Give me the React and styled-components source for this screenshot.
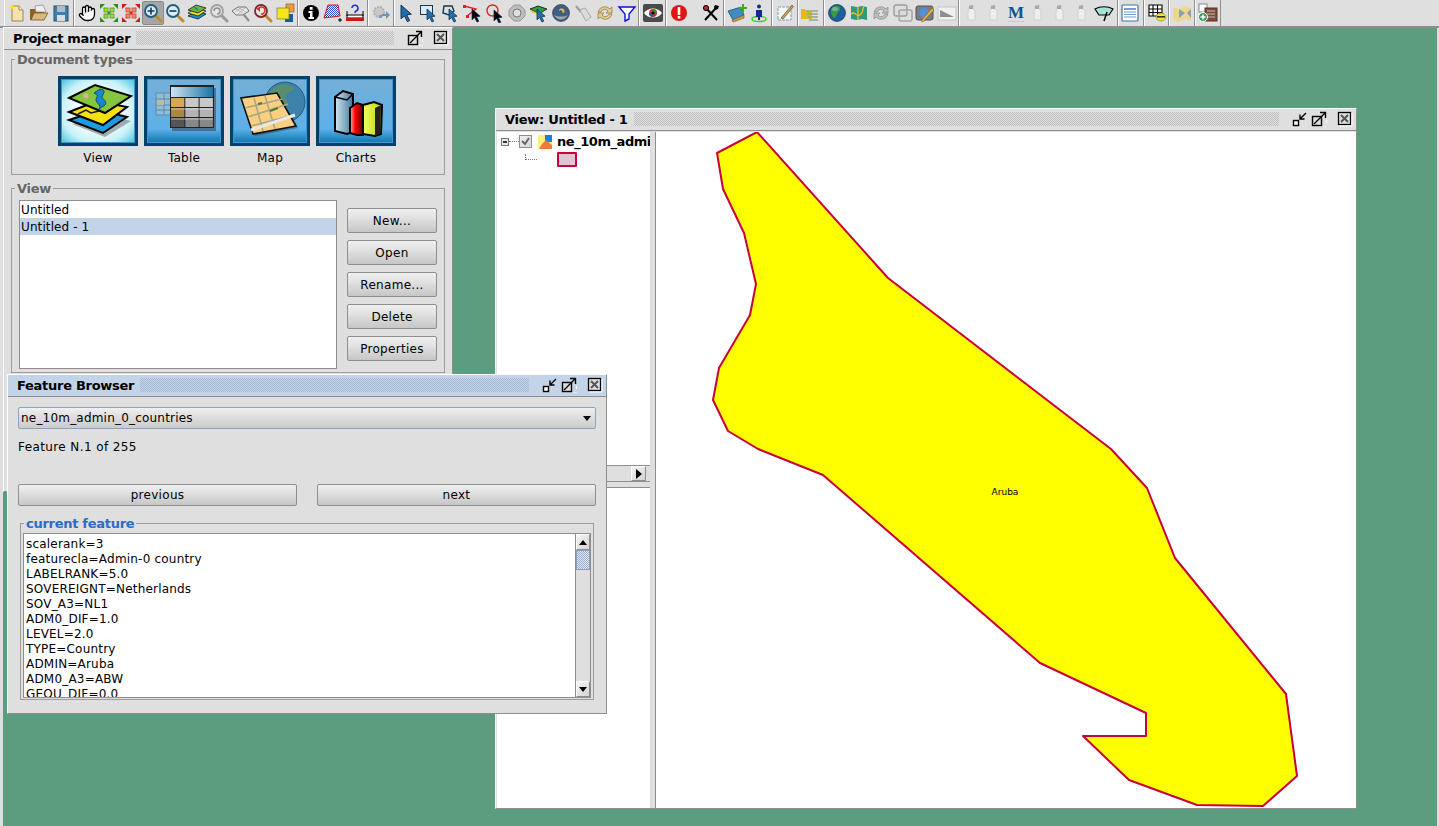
import styled, { createGlobalStyle } from "styled-components";
import { Hand } from "lucide-react";

const GlobalStyle = createGlobalStyle`
  html, body { margin: 0; padding: 0; height: 100%; overflow: hidden; background: #5c9d7f; }
  #root { height: 100%; }
`;

const Page = styled.div`
  display: flex;
  flex-direction: column;
  height: 826px;
  font-family: "DejaVu Sans", sans-serif;
  font-size: 12px;
  color: #000;
`;

/* ---------- toolbar ---------- */
const Toolbar = styled.div`
  display: flex;
  flex: none;
  height: 26px;
  padding-left: 4px;
  background: #dfdfdf;
  border-bottom: 2px solid #8e8e8e;
`;
const ToolGroup = styled.div`
  display: flex;
  flex: none;
  box-sizing: border-box;
  width: ${(p) => p.$w}px;
  padding-left: ${(p) => p.$pad ?? 1}px;
  border-left: 1px solid #fff;
  border-right: 1px solid #8e8e8e;
`;
const ToolSlot = styled.div`
  display: flex;
  flex: none;
  align-items: center;
  justify-content: center;
  box-sizing: border-box;
  width: 22px;
  height: 24px;
  margin-top: 1px;
  margin-left: ${(p) => p.$skip ?? 0}px;
  ${(p) => p.$active && "background: #a6a6a6; border: 1px solid #8a8a8a; border-radius: 2px;"}
`;
const LetterIcon = styled.span`
  font-family: "Liberation Serif", serif;
  font-weight: 700;
  font-size: 17px;
  color: #14508f;
  border-bottom: 1px solid #c8c8c8;
  line-height: 16px;
`;

const G = ({ children, size = 20 }) => (
  <svg width={size} height={size} viewBox="0 0 20 20">
    {children}
  </svg>
);
const Cursor = ({ x = 6, y = 4, c = "#1f6fb0", s = 1 }) => (
  <path
    transform={`translate(${x} ${y}) scale(${s})`}
    d="M0 0l9 8-4 .5 2.5 5-2 1-2.5-5L0 12z"
    fill={c}
    stroke="#0a2a4a"
    strokeWidth=".8"
  />
);
const Lens = ({ ring = "#1d5f7f", fill = "#dcebf4", handle = "#c08a30", children }) => (
  <>
    <line x1="12" y1="12" x2="18" y2="18" stroke={handle} strokeWidth="3" strokeLinecap="round" />
    <circle cx="8" cy="8" r="6" fill={fill} stroke={ring} strokeWidth="1.8" />
    {children}
  </>
);
const Extent = ({ c, dark, light }) => (
  <>
    <path d="M5 5l10 10M15 5L5 15" stroke={c} strokeWidth="1.5" />
    <path d="M1 1h5L1 6zM19 1h-5l5 5zM1 19h5l-5-5zM19 19h-5l5-5z" fill={dark} />
    <rect x="5" y="5" width="4" height="4" fill={light} stroke={dark} strokeWidth=".6" />
    <rect x="11" y="5" width="4" height="4" fill={light} stroke={dark} strokeWidth=".6" />
    <rect x="5" y="11" width="4" height="4" fill={light} stroke={dark} strokeWidth=".6" />
    <rect x="11" y="11" width="4" height="4" fill={light} stroke={dark} strokeWidth=".6" />
  </>
);
const Globe = () => (
  <>
    <circle cx="10" cy="10" r="8.5" fill="#1c5f9c" stroke="#123" strokeWidth=".6" />
    <path d="M5 5c3-3 7-2 8 0 1 3-2 3-3 6s-3 5-4 3-4-6-1-9z" fill="#3d9a3d" />
    <ellipse cx="8" cy="6" rx="3" ry="2" fill="#9ed0f0" opacity=".5" />
  </>
);
const Bottle = () => (
  <>
    <path d="M7 3l4-1v4l2 1v10H6V7l1-1z" fill="#eeeeee" stroke="#d0d0d0" />
    <path d="M7 3l4-1v4H7z" fill="#a9a9a9" />
  </>
);

const icons = {
  newDoc: (
    <G>
      <path d="M5 3h7l4 4v11H5z" fill="#f6e2ae" stroke="#a5814a" />
      <path d="M12 3v4h4" fill="#fff2cc" stroke="#a5814a" />
      <path d="M5 1l1 2 2 .5-2 1L5 7 4 4.500l-2-1 2-.5z" fill="#f5e51a" />
    </G>
  ),
  open: (
    <G>
      <path d="M1 6h5l1 2h8v9H1z" fill="#8a6228" />
      <path d="M6 3l8-1 3 7H7z" fill="#eee" stroke="#888" strokeWidth=".7" />
      <path d="M2 17l3-7h14l-4 7z" fill="#d9b97c" stroke="#7a5520" strokeWidth=".8" />
    </G>
  ),
  save: (
    <G>
      <rect x="3" y="3" width="14" height="15" fill="#3f7fb0" stroke="#22506f" />
      <rect x="6" y="3" width="8" height="6" fill="#b5b9bc" />
      <rect x="6" y="12" width="8" height="6" fill="#dcdcdc" />
    </G>
  ),
  hand: <Hand size={18} fill="#fff" color="#000" strokeWidth={1.7} />,
  extentGreen: (
    <G>
      <Extent c="#3a9a2a" dark="#2c8a1e" light="#a8d634" />
    </G>
  ),
  extentRed: (
    <G>
      <Extent c="#d8301c" dark="#c8200e" light="#f08a78" />
    </G>
  ),
  zoomIn: (
    <G>
      <Lens>
        <path d="M4.500 8h7M8 4.500v7" stroke="#123a55" strokeWidth="1.6" />
      </Lens>
    </G>
  ),
  zoomOut: (
    <G>
      <Lens>
        <path d="M4.500 8h7" stroke="#123a55" strokeWidth="1.6" />
      </Lens>
    </G>
  ),
  layers: (
    <G>
      <path d="M1 13l8-5 10 3-8 5z" fill="#1b8fd8" stroke="#102020" strokeWidth=".8" />
      <path d="M1 10l8-5 10 3-8 5z" fill="#f4e01a" stroke="#102020" strokeWidth=".8" />
      <path d="M1 7l8-5 10 3-8 5z" fill="#6fb43a" stroke="#102020" strokeWidth=".8" />
      <path d="M7 4c2 1 2 2 4 3" stroke="#1b6fb8" fill="none" strokeWidth="1.2" />
    </G>
  ),
  zoomGray: (
    <G>
      <Lens ring="#a0a0a0" handle="#9a9a9a" fill="#e6e6e6">
        <path d="M5 8a3 3 0 1 1 3 3" fill="none" stroke="#8c8c8c" strokeWidth="1.500" />
      </Lens>
    </G>
  ),
  zoomMap: (
    <G>
      <line x1="13" y1="12" x2="18" y2="18" stroke="#8a8a8a" strokeWidth="2" />
      <path d="M1 8l6-4h8l3 4-6 4H5z" fill="#e8e8e8" stroke="#555" strokeWidth=".8" />
      <path d="M5 6l8 5M8 5l7 4M4 9l6-4M7 11l7-6" stroke="#9a9a9a" strokeWidth=".6" />
    </G>
  ),
  zoomBack: (
    <G>
      <Lens ring="#7a2a2a" fill="#eee5e5">
        <path d="M5 7a3.500 3.500 0 1 1 3 4" fill="none" stroke="#d0302a" strokeWidth="1.600" />
        <path d="M3 5h4v4z" fill="#d0302a" />
      </Lens>
    </G>
  ),
  overlap: (
    <G>
      <rect x="11" y="1" width="8" height="8" fill="#f29a3c" stroke="#7a5020" strokeWidth=".6" />
      <rect x="10" y="11" width="8" height="8" fill="#1a5d9e" />
      <rect x="2" y="5" width="12" height="11" fill="#f5e51a" stroke="#665" strokeWidth=".6" />
    </G>
  ),
  info: (
    <G>
      <circle cx="10" cy="10" r="8" fill="#000" />
      <rect x="8.800" y="4" width="2.800" height="2.800" fill="#fff" />
      <path d="M7.500 8h4v6h1.500v2H7.500v-2H9v-4H7.500z" fill="#fff" />
    </G>
  ),
  polygon: (
    <G>
      <defs>
        <pattern id="hatch" width="2" height="2" patternUnits="userSpaceOnUse">
          <rect width="2" height="2" fill="#fff" />
          <rect width="1" height="1" fill="#2244cc" />
          <rect x="1" y="1" width="1" height="1" fill="#2244cc" />
        </pattern>
      </defs>
      <path d="M5 2h10l2 11-16 2z" fill="url(#hatch)" stroke="#e01010" />
      <path d="M15 17h4M17 15v4" stroke="#000" />
    </G>
  ),
  measure: (
    <G>
      <path d="M7 5a3 3 0 1 1 4 3c-1 .5-1 1-1 2" fill="none" stroke="#2030c0" strokeWidth="1.500" />
      <rect x="2" y="12" width="16" height="3" fill="#fff" stroke="#000" />
      <rect x="1" y="15" width="18" height="3" fill="#d01818" />
      <path d="M2 8v5M18 8v5" stroke="#000" />
    </G>
  ),
  gears: (
    <G>
      <circle cx="8" cy="9" r="5" fill="#c8c8c8" stroke="#b0b0b0" strokeWidth="2" strokeDasharray="2 1" />
      <path d="M11 11h4V8l4 4-4 4v-3h-4z" fill="#6d92c0" />
      <rect x="8" y="12" width="3" height="3" fill="#7a9ac2" />
    </G>
  ),
  pointer: (
    <G>
      <Cursor x={4} y={2} s={1.15} />
    </G>
  ),
  rectSel: (
    <G>
      <rect x="1.500" y="2.500" width="12" height="9" fill="#dcebf4" stroke="#14384f" />
      <Cursor x={8} y={6} s={0.9} />
    </G>
  ),
  polySel: (
    <G>
      <path d="M3 3h8l2 5-5 4-6-2z" fill="none" stroke="#14384f" strokeWidth="1.400" />
      <Cursor x={8} y={6} s={0.9} />
    </G>
  ),
  lineSel: (
    <G>
      <path d="M1 3l12 3-9 7" fill="none" stroke="#e02020" strokeWidth="1.400" />
      <rect x="0" y="2" width="3" height="3" fill="#e02020" />
      <rect x="3" y="12" width="3" height="3" fill="#e02020" />
      <Cursor x={9} y={6} c="#000" s={0.9} />
    </G>
  ),
  circleSel: (
    <G>
      <circle cx="7.500" cy="7.500" r="5.500" fill="none" stroke="#e02020" strokeWidth="1.400" />
      <Cursor x={9} y={7} c="#000" s={0.9} />
    </G>
  ),
  ring: (
    <G>
      <path d="M7 2h6l5 5v6l-5 5H7l-5-5V7z" fill="#bdbdbd" stroke="#9a9a9a" />
      <circle cx="10" cy="10" r="4" fill="#dfdfdf" stroke="#777" />
    </G>
  ),
  winged: (
    <G>
      <path d="M1 6l8-3 9 3-8 5z" fill="#2f9a4a" stroke="#111" strokeWidth=".8" />
      <path d="M2 8l7 3 3-2" fill="none" stroke="#e4c820" strokeWidth="1.500" />
      <Cursor x={8} y={6} s={0.9} />
    </G>
  ),
  ballLink: (
    <G>
      <circle cx="10" cy="10" r="8.500" fill="#3d5f86" stroke="#333" strokeWidth=".6" />
      <path d="M3 12c4 6 10 6 14 0-3 2-10 2-14 0z" fill="#a0a6ac" />
      <path d="M8 7c2-3 7-1 5 3l-2-1c1-2-2-3-3-1z" fill="#eec21c" />
    </G>
  ),
  broom: (
    <G>
      <path d="M3 3l5 6" stroke="#9c9c9c" strokeWidth="2.200" />
      <path d="M7 7l5-2 6 9-5 4z" fill="#dcdcdc" stroke="#a6a6a6" />
    </G>
  ),
  sync: (
    <G>
      <path d="M3 9a7 7 0 0 1 12-3l2-2v6h-6l2-2a4 4 0 0 0-7 1z" fill="#e2cc8c" stroke="#8c7a45" strokeWidth=".7" />
      <path d="M17 11a7 7 0 0 1-12 3l-2 2v-6h6l-2 2a4 4 0 0 0 7-1z" fill="#e2cc8c" stroke="#8c7a45" strokeWidth=".7" />
    </G>
  ),
  funnel: (
    <G>
      <path d="M2 4h16l-6 7v5l-4 2v-7z" fill="#fff" stroke="#1010d8" strokeWidth="1.400" />
    </G>
  ),
  eye: (
    <G>
      <rect x="0" y="1" width="20" height="18" rx="2" fill="#4a4a4a" />
      <path d="M1 10c4-6 14-6 18 0-4 6-14 6-18 0z" fill="#fff" />
      <circle cx="10" cy="10" r="4" fill="#d03a2a" />
      <path d="M10 6a4 4 0 0 1 4 4h-4z" fill="#2d9a3a" />
      <path d="M10 14a4 4 0 0 1-4-4h4z" fill="#2a56c0" />
      <circle cx="10" cy="10" r="1.600" fill="#000" />
    </G>
  ),
  alert: (
    <G>
      <circle cx="10" cy="10" r="8" fill="#e01414" />
      <rect x="8.700" y="4" width="2.600" height="8" fill="#fff" />
      <rect x="8.700" y="13" width="2.600" height="2.600" fill="#fff" />
    </G>
  ),
  tools: (
    <G>
      <path d="M4 17L15 5" stroke="#000" strokeWidth="2" />
      <path d="M5 5l11 12" stroke="#000" strokeWidth="2" />
      <circle cx="5" cy="5" r="2.600" fill="#b02a3a" stroke="#000" />
      <path d="M14 2l4 1-1 3-3 1-1-3z" fill="#000" />
    </G>
  ),
  folderAdd: (
    <G>
      <path d="M1 8l13-4 3 8-11 5z" fill="#3f8cc0" stroke="#1a4f70" strokeWidth=".8" />
      <path d="M5 17l12-5v3l-11 4z" fill="#c49a50" stroke="#7a5520" strokeWidth=".6" />
      <path d="M12 4h3V1h2v3h3v2h-3v3h-2V6h-3z" fill="#36b02a" />
    </G>
  ),
  person: (
    <G>
      <ellipse cx="10" cy="16" rx="7" ry="2.500" fill="none" stroke="#2fd82f" strokeWidth="1.400" />
      <circle cx="10" cy="3.500" r="2" fill="#14288f" />
      <path d="M7 7h6v7h-2v3H9v-3H7z" fill="#14288f" />
    </G>
  ),
  framePen: (
    <G>
      <rect x="3" y="4" width="13" height="13" fill="#f4f4f4" stroke="#7aa0c0" strokeDasharray="3 1" />
      <path d="M6 15L17 2l1.500 1.500L8 16z" fill="#c8a050" stroke="#50401c" strokeWidth=".6" />
    </G>
  ),
  folderStack: (
    <G>
      <path d="M1 6h4l1 2h6v8H1z" fill="#e6b820" />
      <path d="M6 8h12M7 11h11M8 14h10M9 17h9" stroke="#9aa58a" strokeWidth="1.500" />
    </G>
  ),
  globe: (
    <G>
      <Globe />
    </G>
  ),
  mapTile: (
    <G>
      <path d="M2 3l6 1 5-1 5 1v13l-5-1-5 1-6-1z" fill="#2f9a7c" />
      <path d="M2 11c5-4 5 4 9 1s2-6 4-9M9 4v13" fill="none" stroke="#eec21c" strokeWidth="1.300" />
    </G>
  ),
  arrowsGray: (
    <G>
      <path d="M3 9a7 7 0 0 1 12-3l2-2v6h-6l2-2a4 4 0 0 0-7 1z" fill="#bdbdbd" stroke="#8a8a8a" strokeWidth=".7" />
      <path d="M17 11a7 7 0 0 1-12 3l-2 2v-6h6l-2 2a4 4 0 0 0 7-1z" fill="#bdbdbd" stroke="#8a8a8a" strokeWidth=".7" />
    </G>
  ),
  links: (
    <G>
      <rect x="1" y="2" width="13" height="11" rx="2" fill="#dcdcdc" stroke="#9c9c9c" strokeWidth="1.400" />
      <rect x="6" y="7" width="13" height="11" rx="2" fill="none" stroke="#a8a8a8" strokeWidth="1.600" />
    </G>
  ),
  photoPen: (
    <G>
      <rect x="1" y="3" width="17" height="14" rx="2" fill="#7c7c7c" stroke="#555" />
      <circle cx="9" cy="10" r="5" fill="#4f90d8" />
      <path d="M6 18L17 5l2 2L8 19z" fill="#e8b040" stroke="#7a5a20" strokeWidth=".6" />
    </G>
  ),
  picture: (
    <G>
      <rect x="1" y="4" width="18" height="13" fill="#f0f0f0" stroke="#c4c4c4" />
      <path d="M3 7l14 7H3z" fill="#8e8e8e" />
    </G>
  ),
  bottle: (
    <G>
      <Bottle />
    </G>
  ),
  letterM: <LetterIcon>M</LetterIcon>,
  wiper: (
    <G>
      <path d="M1 6c5-3 13-3 18 0l-4 6H5z" fill="#a8e0d8" stroke="#000" strokeWidth="1.200" />
      <path d="M10 18l3-9" stroke="#000" strokeWidth="1.400" />
    </G>
  ),
  tableDoc: (
    <G>
      <rect x="2" y="2" width="16" height="16" rx="1" fill="#fff" stroke="#3a78b0" strokeWidth="1.200" />
      <path d="M4 5h12v2H4zM4 8.500h12v1H4zM4 11h12v1H4zM4 13.500h12v1H4z" fill="#6f9fd0" />
    </G>
  ),
  gridYellow: (
    <G>
      <path d="M2 2h13v11H2zM6 2v11M10.500 2v11M2 6h13M2 9.500h13" fill="#fff" stroke="#000" strokeWidth="1.100" />
      <ellipse cx="14" cy="14" rx="5" ry="4" fill="#f5e51a" stroke="#776" strokeWidth=".6" />
      <rect x="10" y="13" width="8" height="1.600" fill="#333" />
    </G>
  ),
  mapFold: (
    <G>
      <path d="M1 4l6 2 6-3 6 2v13l-6-2-6 3-6-2z" fill="#ecd88c" />
      <path d="M7 6l6 4-6 5zM19 6l-4 4 4 5z" fill="#8a9cc0" />
    </G>
  ),
  addBox: (
    <G>
      <rect x="1" y="1" width="8" height="8" fill="#fff" stroke="#888" />
      <rect x="7" y="5" width="12" height="13" fill="#7e4a40" stroke="#5a3028" />
      <path d="M9 8h8M9 11h8M9 14h8" stroke="#c8c0b0" />
      <circle cx="5" cy="14" r="4.500" fill="#3a9a5a" stroke="#fff" />
      <path d="M2.500 14h5M5 11.500v5" stroke="#fff" strokeWidth="1.400" />
    </G>
  ),
};

const toolGroups = [
  { w: 70, items: ["newDoc", "open", "save"] },
  { w: 224, items: ["hand", "extentGreen", "extentRed", "zoomIn", "zoomOut", "layers", "zoomGray", "zoomMap", "zoomBack", "overlap"] },
  { w: 70, items: ["info", "polygon", "measure"] },
  { w: 26, pad: 1, items: ["gears"] },
  { w: 245, items: ["pointer", "rectSel", "polySel", "lineSel", "circleSel", "ring", "winged", "ballLink", "broom", "sync", "funnel"] },
  { w: 27, pad: 2, items: ["eye"] },
  { w: 58, items: ["alert", "tools"], skip: 10 },
  { w: 48, items: ["folderAdd", "person"] },
  { w: 26, pad: 1, items: ["framePen"] },
  { w: 26, pad: 0, items: ["folderStack"] },
  { w: 135, items: ["globe", "mapTile", "arrowsGray", "links", "photoPen", "picture"] },
  { w: 159, pad: 1, items: ["bottle", "bottle", "letterM", "bottle", "bottle", "bottle", "wiper"] },
  { w: 26, pad: 0, items: ["tableDoc"] },
  { w: 25, pad: 1, items: ["gridYellow"] },
  { w: 26, pad: 1, items: ["mapFold"] },
  { w: 26, pad: 1, items: ["addBox"] },
];

/* ---------- desktop and internal frames ---------- */
const Desktop = styled.div`
  position: relative;
  flex: 1;
  box-sizing: border-box;
  background: #5c9d7f;
  border-left: 3px solid #dfdfdf;
  border-right: 2px solid #dfdfdf;
`;
const Frame = styled.section`
  position: absolute;
  left: ${(p) => p.$x}px;
  top: ${(p) => p.$y}px;
  width: ${(p) => p.$w}px;
  height: ${(p) => p.$h}px;
  box-sizing: border-box;
  display: flex;
  flex-direction: column;
  background: #dfdfdf;
  border: 1px solid #8e8e8e;
  border-top-color: #fff;
  border-left-color: #fff;
`;
const TitleBar = styled.header`
  display: flex;
  flex: none;
  align-items: center;
  box-sizing: border-box;
  height: 22px;
  padding: 0 3px 1px ${(p) => p.$indent}px;
  background: ${(p) => (p.$active ? "#c3d4e8" : "#dfdfdf")};
  border-bottom: 1px solid #8e8e8e;
`;
const TitleText = styled.span`
  font-weight: 700;
  font-size: 13px;
  letter-spacing: -0.28px;
  white-space: pre;
`;
const dots = (c) => `
  radial-gradient(circle at 0.5px 0.5px, ${c} 0.6px, transparent 0.6px) 0 0 / 2px 2px,
  radial-gradient(circle at 0.5px 0.5px, ${c} 0.6px, transparent 0.6px) 1px 1px / 2px 2px
`;
const Bumps = styled.div`
  flex: 1;
  height: 14px;
  margin: 0 10px 0 6px;
  background: ${(p) => dots(p.$active ? "#a6b7d0" : "#c0c0c0")};
`;
const TitleIcon = styled.svg`
  flex: none;
  width: 16px;
  height: 16px;
  margin-left: ${(p) => p.$gap ?? 3}px;
`;

const MinIcon = ({ gap }) => (
  <TitleIcon viewBox="0 0 16 16" $gap={gap}>
    <rect x="1.500" y="9.500" width="5" height="5" fill="#fff" stroke="#000" strokeWidth="1.400" />
    <path d="M8 8l6-6M8 3.500V8h4.500" fill="none" stroke="#000" strokeWidth="1.400" />
  </TitleIcon>
);
const MaxIcon = ({ gap }) => (
  <TitleIcon viewBox="0 0 16 16" $gap={gap}>
    <rect x="1.500" y="5.500" width="9" height="9" fill="#dfdfdf" stroke="#000" strokeWidth="1.400" />
    <path d="M3 13L14.500 1.500M9 1.500h5.500V7" fill="none" stroke="#000" strokeWidth="1.400" />
    <path d="M12 16h4M15.500 9v3" stroke="#fff" />
  </TitleIcon>
);
const CloseIcon = ({ gap }) => (
  <TitleIcon viewBox="0 0 16 16" $gap={gap}>
    <rect x="1.500" y="1.500" width="12" height="12" fill="#dfdfdf" stroke="#000" strokeWidth="1.300" />
    <path d="M4 4l7 7M11 4l-7 7" stroke="#555" strokeWidth="2" />
    <path d="M15 2v13H2" fill="none" stroke="#fff" />
  </TitleIcon>
);

/* ---------- project manager ---------- */
const FrameBody = styled.div`
  display: flex;
  flex-direction: column;
  padding: ${(p) => p.$pad};
`;
const Group = styled.div`
  position: relative;
  box-sizing: border-box;
  height: ${(p) => p.$h}px;
  margin-top: ${(p) => p.$mt ?? 0}px;
  border: 1px solid #9c9c9c;
`;
const GroupLabel = styled.span`
  position: absolute;
  top: -9px;
  left: ${(p) => p.$left ?? 3}px;
  padding: 0 2px;
  background: #dfdfdf;
  font-weight: 700;
  font-size: 13px;
  letter-spacing: -0.28px;
  line-height: 17px;
  color: ${(p) => p.$color ?? "#666"};
`;
const DocRow = styled.div`
  display: flex;
  justify-content: center;
  gap: 6px;
  padding: 16px 2px 0 0;
`;
const DocType = styled.div`
  display: flex;
  flex-direction: column;
  align-items: center;
  width: 80px;
`;
const DocButton = styled.div`
  box-sizing: border-box;
  width: 80px;
  height: 70px;
  border: 3px solid #01416a;
  box-shadow: inset 0 0 0 1px #3f94c9;
  background: ${(p) =>
    p.$selected
      ? "radial-gradient(ellipse at center, #ffffff 35%, #c8f2f8 70%, #3fc0e0 100%)"
      : "linear-gradient(#74b0d8, #5db0e8 78%, #1a7fb8 96%)"};
`;
const DocLabel = styled.span`
  margin-top: 5px;
  line-height: 15px;
  letter-spacing: 0.2px;
`;
const ViewRow = styled.div`
  display: flex;
  padding: 11px 7px 0;
  gap: 10px;
`;
const ListBox = styled.div`
  flex: none;
  box-sizing: border-box;
  width: 318px;
  height: 169px;
  background: #fff;
  border: 1px solid #8e8e8e;
`;
const ListRow = styled.div`
  height: 17px;
  line-height: 19px;
  padding-left: 1px;
  letter-spacing: 0.1px;
  background: ${(p) => (p.$selected ? "#c3d4e8" : "transparent")};
`;
const ButtonColumn = styled.div`
  display: flex;
  flex-direction: column;
  gap: 7px;
  padding-top: 8px;
`;
const MetalButton = styled.button`
  box-sizing: border-box;
  width: ${(p) => p.$w}px;
  height: ${(p) => p.$h}px;
  padding: 0;
  font: 12px "DejaVu Sans", sans-serif;
  letter-spacing: 0.3px;
  color: #000;
  background: linear-gradient(#f0f0f0, #dedede 45%, #c6c6c6);
  border: 1px solid #8e8e8e;
  border-radius: 2px;
`;

/* ---------- feature browser ---------- */
const Combo = styled.div`
  display: flex;
  align-items: center;
  justify-content: space-between;
  box-sizing: border-box;
  height: 22px;
  padding: 0 3px 0 2px;
  letter-spacing: 0.2px;
  background: linear-gradient(#f0f0f0, #dedede 45%, #cbcbcb);
  border: 1px solid #8da2bd;
  border-radius: 2px;
`;
const ComboArrow = styled.span`
  width: 0;
  height: 0;
  margin-right: 1px;
  border: 4px solid transparent;
  border-top: 5px solid #000;
  border-bottom: 0;
`;
const FeatureCount = styled.div`
  height: 15px;
  line-height: 15px;
  margin: 11px 0 29px;
  letter-spacing: 0.4px;
`;
const PagerRow = styled.div`
  display: flex;
  justify-content: space-between;
`;
const PropertyGroupWrap = styled.div`
  padding: 0 2px;
`;
const TextPane = styled.div`
  display: flex;
  box-sizing: border-box;
  height: 165px;
  margin: 9px 2px 0;
  background: #fff;
  border: 1px solid #8e8e8e;
`;
const Lines = styled.div`
  flex: 1;
  overflow: hidden;
  padding: 3px 0 0 2px;
  line-height: 15px;
  letter-spacing: 0.2px;
`;
const ScrollBar = styled.div`
  display: flex;
  flex: none;
  flex-direction: ${(p) => (p.$horizontal ? "row" : "column")};
  box-sizing: border-box;
  width: ${(p) => (p.$horizontal ? "auto" : "15px")};
  height: ${(p) => (p.$horizontal ? "17px" : "auto")};
  background: #dfdfdf;
  border-left: ${(p) => (p.$horizontal ? "0" : "1px solid #8e8e8e")};
  border-top: ${(p) => (p.$horizontal ? "1px solid #8e8e8e" : "0")};
  border-bottom: ${(p) => (p.$horizontal ? "1px solid #8e8e8e" : "0")};
`;
const ScrollButton = styled.div`
  display: flex;
  flex: none;
  align-items: center;
  justify-content: center;
  box-sizing: border-box;
  width: ${(p) => (p.$horizontal ? "15px" : "14px")};
  height: ${(p) => (p.$horizontal ? "15px" : "16px")};
  background: linear-gradient(135deg, #f4f4f4, #d4d4d4);
  border: 1px solid #8e8e8e;
  border-top-color: #fff;
  border-left-color: #fff;
`;
const Thumb = styled.div`
  flex: none;
  height: 20px;
  box-sizing: border-box;
  background: ${dots("#9aadc9")}, #dfe7f2;
  border: 1px solid #8e9fb8;
`;
const Track = styled.div`
  flex: ${(p) => (p.$w ? "none" : "1")};
  width: ${(p) => (p.$w ? `${p.$w}px` : "auto")};
`;
const Triangle = styled.span`
  width: 0;
  height: 0;
  border-style: solid;
  border-color: transparent;
  ${(p) =>
    p.$dir === "up"
      ? "border-width: 0 4px 5px; border-bottom-color: #000;"
      : p.$dir === "down"
        ? "border-width: 5px 4px 0; border-top-color: #000;"
        : "border-width: 5px 0 5px 6px; border-left-color: #000;"}
`;

/* ---------- view window ---------- */
const ViewBody = styled.div`
  display: flex;
  flex: 1;
  min-height: 0;
  padding: 1px 0 0 1px;
`;
const TocColumn = styled.div`
  display: flex;
  flex: none;
  flex-direction: column;
  width: 153px;
  overflow: hidden;
`;
const TocTree = styled.div`
  flex: none;
  height: 333px;
  background: #fff;
  padding-top: 1px;
  box-sizing: border-box;
  overflow: hidden;
`;
const TreeRow = styled.div`
  display: flex;
  align-items: center;
  height: ${(p) => p.$h}px;
  white-space: nowrap;
`;
const Expander = styled.span`
  box-sizing: border-box;
  flex: none;
  width: 8px;
  height: 8px;
  margin-left: 4px;
  background: linear-gradient(#333, #333) center / 4px 2px no-repeat, #e8e8e8;
  border: 1px solid #777;
`;
const Dots = styled.span`
  flex: none;
  width: ${(p) => p.$w}px;
  margin-left: ${(p) => p.$ml ?? 0}px;
  border-top: 1px dotted #777;
`;
const Elbow = styled.span`
  flex: none;
  box-sizing: border-box;
  width: 12px;
  height: 6px;
  margin: 0 0 5px 28px;
  border-left: 1px dotted #777;
  border-bottom: 1px dotted #777;
`;
const CheckBox = styled.span`
  display: flex;
  flex: none;
  align-items: center;
  justify-content: center;
  box-sizing: border-box;
  width: 13px;
  height: 13px;
  margin-right: 6px;
  background: linear-gradient(135deg, #eee, #d8d8d8);
  border: 1px solid #8e8e8e;
`;
const LayerIcon = styled.svg`
  flex: none;
  width: 14px;
  height: 14px;
`;
const LayerName = styled.span`
  margin-left: 5px;
  font-weight: 700;
  font-size: 13px;
  letter-spacing: -0.45px;
`;
const Swatch = styled.span`
  box-sizing: border-box;
  flex: none;
  width: 20px;
  height: 15px;
  margin-left: 20px;
  background: #e0c4d4;
  border: 2px solid #c8003c;
  border-radius: 1px;
`;
const SplitH = styled.div`
  flex: none;
  height: 6px;
  background: #dfdfdf;
  border-bottom: 1px solid #8e8e8e;
  box-sizing: border-box;
`;
const LegendPane = styled.div`
  flex: 1;
  background: #fff;
`;
const SplitV = styled.div`
  flex: none;
  width: 6px;
  box-sizing: border-box;
  background: #dfdfdf;
  border-right: 1px solid #8e8e8e;
`;
const MapCanvas = styled.svg`
  display: block;
  flex: 1;
  min-width: 0;
  height: 100%;
  background: #fff;
`;

const arubaPoints =
  "757,132 717,153 723,189 744,233 756,284 750,315 719,368 713,400 728,431 758,449 823,475 1040,663 1146,713 1146,736 1083,736 1129,780 1197,805 1263,806 1297,776 1286,694 1175,558 1147,488 1111,449 888,278";

const DocLayers = () => (
  <svg width="74" height="64" viewBox="3 3 74 64">
    <path d="M12 46l34-9 25 6-26 16z" fill="#000" opacity=".3" transform="translate(2 2)" />
    <path d="M11 44l30-10 28 7-24 16z" fill="#1b9be0" stroke="#000" strokeWidth="2" />
    <path d="M11 36l28-11 30 6-24 18z" fill="#f6e012" stroke="#000" strokeWidth="2" />
    <path d="M20 38l8-4 5 3 8-2M36 30l9 4" fill="none" stroke="#1a1a1a" strokeWidth="1.500" />
    <path d="M11 22L37 9l36 11-26 17z" fill="#84c63c" stroke="#000" strokeWidth="2" />
    <path d="M42 13c8 1 2 6 2 8s6 4 3 8l-6 4c3-4-3-6-3-9s4-4-2-7z" fill="#1a88c8" stroke="#0d4f70" />
    <circle cx="28" cy="20" r="2.500" fill="#e8a8a0" />
  </svg>
);
const DocTable = () => (
  <svg width="74" height="64" viewBox="3 3 74 64">
    <defs>
      <linearGradient id="hd" x1="0" x2="1">
        <stop offset="0" stopColor="#cfe3ef" />
        <stop offset="1" stopColor="#1a74a8" />
      </linearGradient>
    </defs>
    <g opacity=".75">
      <rect x="12" y="17" width="16" height="22" fill="#9ec0d8" stroke="#5a7f98" />
      <path d="M12 23h16M12 29h16M12 34h16M20 17v22" stroke="#5a7f98" />
      <rect x="13" y="24" width="7" height="5" fill="#d8c090" />
    </g>
    <rect x="28" y="12" width="44" height="43" fill="#334" opacity=".5" />
    <rect x="26" y="9" width="44" height="43" fill="#222" />
    <rect x="27" y="11" width="42" height="10" fill="url(#hd)" />
    {[0, 1, 2].map((r) =>
      [0, 1, 2].map((c) => (
        <rect
          key={`${r}-${c}`}
          x={27 + c * 14.3}
          y={22 + r * 10}
          width="13.300"
          height="9"
          fill={c === 0 ? ["#d8a850", "#a88848", "#555"][r] : ["#c8c8c8", "#b4b4b4", "#888"][r]}
        />
      ))
    )}
    <path d="M27 33h42M27 43h42" stroke="#f0f0f0" opacity=".6" />
  </svg>
);
const DocMap = () => (
  <svg width="74" height="64" viewBox="3 3 74 64">
    <circle cx="55" cy="26" r="20" fill="#3d82a8" stroke="#246080" />
    <path d="M42 14c6-6 16-7 22-2-2 5-6 3-8 7s4 8-2 12-8-4-12-6-6-6 0-11z" fill="#5a8d6c" />
    <path d="M23 58L11 22l36-5 19 33z" fill="#000" opacity=".3" transform="translate(2 2)" />
    <path d="M23 58L11 22l36-5 19 33z" fill="#fcd080" stroke="#111" strokeWidth="1.600" />
    <path d="M15 32l37-9M18 41l40-13M21 50l42-11M24 22l9 33M35 20l10 33" stroke="#a8a888" strokeWidth="1.600" />
    <path d="M21 54l44-15" stroke="#e8e8e8" strokeWidth="3" />
    <path d="M40 35l8-3M28 28l4-1" stroke="#4f7a3a" strokeWidth="2" />
  </svg>
);
const DocCharts = () => (
  <svg width="74" height="64" viewBox="3 3 74 64">
    <defs>
      <linearGradient id="bb" x1="0" x2="1">
        <stop offset="0" stopColor="#d4e6ef" />
        <stop offset="1" stopColor="#3f7aa0" />
      </linearGradient>
      <linearGradient id="br" x1="0" x2="1">
        <stop offset="0" stopColor="#ffb0b0" />
        <stop offset=".4" stopColor="#f00" />
        <stop offset="1" stopColor="#600" />
      </linearGradient>
      <linearGradient id="by" x1="0" x2="1">
        <stop offset="0" stopColor="#f4ff60" />
        <stop offset="1" stopColor="#b8d010" />
      </linearGradient>
    </defs>
    <path d="M19 21l8-6 10 3v38l-6 2-12-3z" fill="url(#bb)" stroke="#000" strokeWidth="2" />
    <path d="M19 21l12 3 6-6" fill="none" stroke="#000" strokeWidth="1.500" />
    <path d="M34 32l7-5 6 2v30h-6l-7-2z" fill="url(#br)" stroke="#000" strokeWidth="2" />
    <path d="M47 29l11-3 8 3-1 29-6 2-12-2z" fill="url(#by)" stroke="#000" strokeWidth="2" />
    <path d="M59 32l6-3-1 29-5 2z" fill="#222" />
  </svg>
);

const docTypes = [
  { label: "View", art: <DocLayers />, selected: true },
  { label: "Table", art: <DocTable /> },
  { label: "Map", art: <DocMap /> },
  { label: "Charts", art: <DocCharts /> },
];

const featureLines = [
  "scalerank=3",
  "featurecla=Admin-0 country",
  "LABELRANK=5.0",
  "SOVEREIGNT=Netherlands",
  "SOV_A3=NL1",
  "ADM0_DIF=1.0",
  "LEVEL=2.0",
  "TYPE=Country",
  "ADMIN=Aruba",
  "ADM0_A3=ABW",
  "GEOU_DIF=0.0",
];

const App = () => (
  <Page>
    <GlobalStyle />
    <Toolbar>
      {toolGroups.map((group, i) => (
        <ToolGroup key={i} $w={group.w} $pad={group.pad}>
          {group.items.map((name, j) => (
            <ToolSlot key={j} $active={name === "zoomIn"} $skip={j === 1 ? group.skip : 0}>
              {icons[name]}
            </ToolSlot>
          ))}
        </ToolGroup>
      ))}
    </Toolbar>

    <Desktop>
      <Frame $x={0} $y={-1} $w={450} $h={465}>
        <TitleBar $indent={9}>
          <TitleText>Project manager</TitleText>
          <Bumps />
          <MaxIcon />
          <CloseIcon gap={10} />
        </TitleBar>
        <FrameBody $pad="9px 7px 0">
          <Group $h={116}>
            <GroupLabel>Document types</GroupLabel>
            <DocRow>
              {docTypes.map((doc) => (
                <DocType key={doc.label}>
                  <DocButton $selected={doc.selected}>{doc.art}</DocButton>
                  <DocLabel>{doc.label}</DocLabel>
                </DocType>
              ))}
            </DocRow>
          </Group>
          <Group $h={185} $mt={13}>
            <GroupLabel>View</GroupLabel>
            <ViewRow>
              <ListBox>
                <ListRow>Untitled</ListRow>
                <ListRow $selected>Untitled - 1</ListRow>
              </ListBox>
              <ButtonColumn>
                {["New...", "Open", "Rename...", "Delete", "Properties"].map((label) => (
                  <MetalButton key={label} $w={90} $h={25}>
                    {label}
                  </MetalButton>
                ))}
              </ButtonColumn>
            </ViewRow>
          </Group>
        </FrameBody>
      </Frame>

      <Frame $x={492} $y={80} $w={862} $h={701}>
        <TitleBar $indent={9}>
          <TitleText>View: Untitled - 1</TitleText>
          <Bumps />
          <MinIcon />
          <MaxIcon />
          <CloseIcon gap={10} />
        </TitleBar>
        <ViewBody>
          <TocColumn>
            <TocTree>
              <TreeRow $h={17}>
                <Expander />
                <Dots $w={10} />
                <CheckBox>
                  <svg width="9" height="9" viewBox="0 0 9 9">
                    <path d="M1 4l3 3 4-6" fill="none" stroke="#666" strokeWidth="2" />
                  </svg>
                </CheckBox>
                <LayerIcon viewBox="0 0 14 14">
                  <rect width="14" height="14" fill="#f8f080" />
                  <rect x="7" width="7" height="7" fill="#1a7fe0" />
                  <path d="M1 14l3-5 4-4 6 5v4z" fill="#f07a3c" />
                </LayerIcon>
                <LayerName>ne_10m_admin_0_countries</LayerName>
              </TreeRow>
              <TreeRow $h={19}>
                <Elbow />
                <Swatch />
              </TreeRow>
            </TocTree>
            <ScrollBar $horizontal>
              <Track />
              <ScrollButton $horizontal>
                <Triangle $dir="right" />
              </ScrollButton>
              <Track $w={4} />
            </ScrollBar>
            <SplitH />
            <LegendPane />
          </TocColumn>
          <SplitV />
          <MapCanvas viewBox="656 132 700 676" preserveAspectRatio="xMinYMin slice">
            <polygon points={arubaPoints} fill="#ffff00" stroke="#c8003c" strokeWidth="2" strokeLinejoin="round" />
            <text x="1005" y="495" textAnchor="middle" fontFamily="DejaVu Sans, sans-serif" fontSize="9">
              Aruba
            </text>
          </MapCanvas>
        </ViewBody>
      </Frame>

      <Frame $x={4} $y={346} $w={600} $h={340}>
        <TitleBar $active $indent={9}>
          <TitleText>Feature Browser</TitleText>
          <Bumps $active />
          <MinIcon />
          <MaxIcon />
          <CloseIcon gap={10} />
        </TitleBar>
        <FrameBody $pad="10px 10px 0">
          <Combo>
            ne_10m_admin_0_countries
            <ComboArrow />
          </Combo>
          <FeatureCount>Feature N.1 of 255</FeatureCount>
          <PagerRow>
            <MetalButton $w={279} $h={22}>
              previous
            </MetalButton>
            <MetalButton $w={279} $h={22}>
              next
            </MetalButton>
          </PagerRow>
          <PropertyGroupWrap>
            <Group $h={177} $mt={17}>
              <GroupLabel $color="#2f6bc8">current feature</GroupLabel>
              <TextPane>
                <Lines>
                  {featureLines.map((line) => (
                    <div key={line}>{line}</div>
                  ))}
                </Lines>
                <ScrollBar>
                  <ScrollButton>
                    <Triangle $dir="up" />
                  </ScrollButton>
                  <Thumb />
                  <Track />
                  <ScrollButton>
                    <Triangle $dir="down" />
                  </ScrollButton>
                </ScrollBar>
              </TextPane>
            </Group>
          </PropertyGroupWrap>
        </FrameBody>
      </Frame>
    </Desktop>
  </Page>
);

export default App;
